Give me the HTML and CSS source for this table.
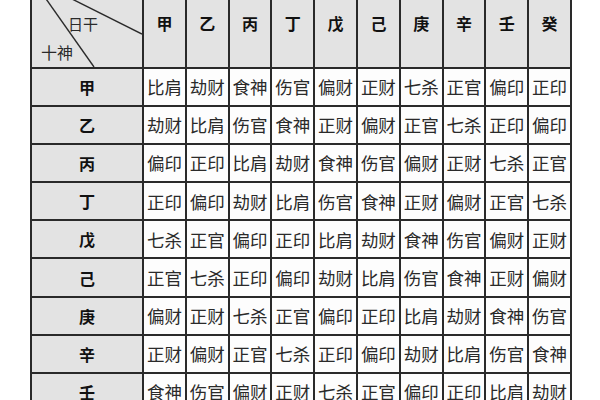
FILE: index.html
```html
<!DOCTYPE html>
<html lang="zh">
<head>
<meta charset="utf-8">
<title>十神表</title>
<link rel="stylesheet" href="styles.css">
</head>
<body>
<div class="tbl">
  <div class="c corner">
    <svg class="diag" width="110" height="88" viewBox="0 0 110 88" preserveAspectRatio="none">
      <line x1="0" y1="0" x2="62" y2="88" stroke="#2a2a2a" stroke-width="1.4"/>
      <line x1="0" y1="0" x2="110" y2="55" stroke="#2a2a2a" stroke-width="1.4"/>
    </svg>
    <span class="lab lab-top">日干</span>
    <span class="lab lab-bot">十神</span>
  </div>
  <div class="c h">甲</div><div class="c h">乙</div><div class="c h">丙</div><div class="c h">丁</div><div class="c h">戊</div><div class="c h">己</div><div class="c h">庚</div><div class="c h">辛</div><div class="c h">壬</div><div class="c h">癸</div>

  <div class="c r">甲</div><div class="c d">比肩</div><div class="c d">劫财</div><div class="c d">食神</div><div class="c d">伤官</div><div class="c d">偏财</div><div class="c d">正财</div><div class="c d">七杀</div><div class="c d">正官</div><div class="c d">偏印</div><div class="c d">正印</div>
  <div class="c r">乙</div><div class="c d">劫财</div><div class="c d">比肩</div><div class="c d">伤官</div><div class="c d">食神</div><div class="c d">正财</div><div class="c d">偏财</div><div class="c d">正官</div><div class="c d">七杀</div><div class="c d">正印</div><div class="c d">偏印</div>
  <div class="c r">丙</div><div class="c d">偏印</div><div class="c d">正印</div><div class="c d">比肩</div><div class="c d">劫财</div><div class="c d">食神</div><div class="c d">伤官</div><div class="c d">偏财</div><div class="c d">正财</div><div class="c d">七杀</div><div class="c d">正官</div>
  <div class="c r">丁</div><div class="c d">正印</div><div class="c d">偏印</div><div class="c d">劫财</div><div class="c d">比肩</div><div class="c d">伤官</div><div class="c d">食神</div><div class="c d">正财</div><div class="c d">偏财</div><div class="c d">正官</div><div class="c d">七杀</div>
  <div class="c r">戊</div><div class="c d">七杀</div><div class="c d">正官</div><div class="c d">偏印</div><div class="c d">正印</div><div class="c d">比肩</div><div class="c d">劫财</div><div class="c d">食神</div><div class="c d">伤官</div><div class="c d">偏财</div><div class="c d">正财</div>
  <div class="c r">己</div><div class="c d">正官</div><div class="c d">七杀</div><div class="c d">正印</div><div class="c d">偏印</div><div class="c d">劫财</div><div class="c d">比肩</div><div class="c d">伤官</div><div class="c d">食神</div><div class="c d">正财</div><div class="c d">偏财</div>
  <div class="c r">庚</div><div class="c d">偏财</div><div class="c d">正财</div><div class="c d">七杀</div><div class="c d">正官</div><div class="c d">偏印</div><div class="c d">正印</div><div class="c d">比肩</div><div class="c d">劫财</div><div class="c d">食神</div><div class="c d">伤官</div>
  <div class="c r">辛</div><div class="c d">正财</div><div class="c d">偏财</div><div class="c d">正官</div><div class="c d">七杀</div><div class="c d">正印</div><div class="c d">偏印</div><div class="c d">劫财</div><div class="c d">比肩</div><div class="c d">伤官</div><div class="c d">食神</div>
  <div class="c r">壬</div><div class="c d">食神</div><div class="c d">伤官</div><div class="c d">偏财</div><div class="c d">正财</div><div class="c d">七杀</div><div class="c d">正官</div><div class="c d">偏印</div><div class="c d">正印</div><div class="c d">比肩</div><div class="c d">劫财</div>
</div>
</body>
</html>
```

FILE: styles.css
```css
html, body {
  margin: 0;
  padding: 0;
  background: #ffffff;
  overflow: hidden;
}

body {
  width: 600px;
  height: 400px;
  font-family: "Noto Sans CJK SC", "Noto Sans", sans-serif;
  color: #1a1a1a;
}

.tbl {
  display: grid;
  grid-template-columns: 112px repeat(10, 42.8px);
  grid-template-rows: 90px repeat(9, 38.1px);
  width: 542px;
  margin-left: 30px;
  margin-top: -23px;
  border-left: 2px solid #2a2a2a;
  border-top: 2px solid #2a2a2a;
  box-sizing: border-box;
}

.c {
  box-sizing: border-box;
  border-right: 2px solid #2a2a2a;
  border-bottom: 2px solid #2a2a2a;
  display: flex;
  align-items: center;
  justify-content: center;
  line-height: 1;
}

.h, .r, .corner {
  background: #e3e3e3;
}

.h, .r {
  font-weight: 700;
  font-size: 16px;
  color: #111;
}

.d {
  background: #fdfdfd;
  font-size: 17.5px;
  font-weight: 400;
  color: #2a2a2a;
}

.corner {
  position: relative;
}

.diag {
  position: absolute;
  left: 0;
  top: 0;
}

.lab {
  position: absolute;
  font-size: 15px;
  color: #2a2a2a;
  line-height: 1;
}

.lab-top {
  left: 36px;
  top: 37px;
}

.lab-bot {
  left: 9px;
  top: 65px;
  font-size: 16px;
}
```
